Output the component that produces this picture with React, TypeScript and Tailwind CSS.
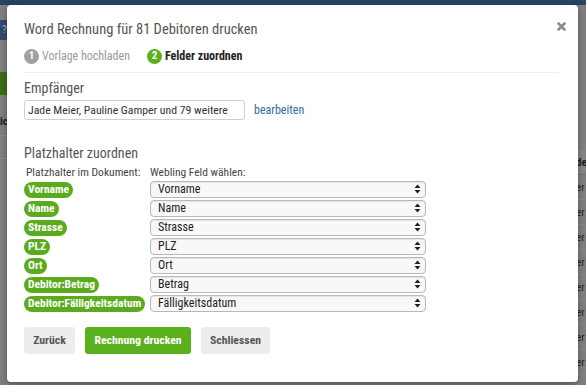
import React from 'react';

const fields = [
  { tag: 'Vorname', value: 'Vorname' },
  { tag: 'Name', value: 'Name' },
  { tag: 'Strasse', value: 'Strasse' },
  { tag: 'PLZ', value: 'PLZ' },
  { tag: 'Ort', value: 'Ort' },
  { tag: 'Debitor:Betrag', value: 'Betrag' },
  { tag: 'Debitor:Fälligkeitsdatum', value: 'Fälligkeitsdatum' },
];

function SelectArrows() {
  return (
    <svg className="absolute right-[5px] top-[3px] pointer-events-none" width="7" height="10" viewBox="0 0 7 10">
      <path d="M3.5 0.5 L6.5 4 H0.5 Z" fill="#222" />
      <path d="M3.5 9.5 L6.5 6 H0.5 Z" fill="#222" />
    </svg>
  );
}

function FieldRow({ tag, value }: { tag: string; value: string }) {
  return (
    <div className="flex items-center h-[19px]">
      <div className="w-[126px] shrink-0 flex items-center h-[19px]">
        <span className="flex items-center h-[16px] px-[4px] rounded-full bg-[#5bab1e] text-white text-[11.5px] font-bold leading-none whitespace-nowrap">
          {tag}
        </span>
      </div>
      <div className="relative flex w-[276px] h-[17px]">
        <select
          defaultValue={value}
          className="block appearance-none w-full h-[17px] py-0 rounded-[4px] border border-[#b8b8b8] bg-[#f8f8f8] pl-[7px] text-[12px] leading-[15px] text-[#222] shadow-[inset_0_1px_1px_rgba(0,0,0,0.08)]"
          style={{ fontFamily: '"Roboto Condensed", sans-serif' }}
        >
          <option>{value}</option>
        </select>
        <SelectArrows />
      </div>
    </div>
  );
}

function Step({ n, label, active }: { n: number; label: string; active?: boolean }) {
  return (
    <div className="flex items-center gap-[3px]">
      <span
        className={
          active
            ? 'flex items-center justify-center w-[15px] h-[15px] rounded-full bg-[#5bb01d] text-white text-[11px] font-bold'
            : 'flex items-center justify-center w-[15px] h-[15px] rounded-full bg-[#a0a0a0] text-white text-[11px] font-bold'
        }
      >
        {n}
      </span>
      <span className={active ? 'text-[12px] font-bold text-[#222]' : 'text-[12px] text-[#9a9a9a]'}>{label}</span>
    </div>
  );
}

export default function App() {
  return (
    <div
      className="relative w-[586px] h-[385px] overflow-hidden bg-[#7f7f7f]"
      style={{ fontFamily: '"Roboto Condensed", Roboto, sans-serif' }}
    >
      {/* Page behind the dialog (already dimmed) */}
      <div className="h-[5px] bg-[#274464]" />
      <div className="flex">
        <div className="w-[10px] shrink-0 overflow-hidden">
          <div className="mt-[15px] h-[20px] bg-[#2f4b6b] text-[#9fb3c8] text-[11px] leading-[20px] pl-[2px]">?</div>
          <div className="mt-[32px] h-[23px] bg-[#3d6e17]" />
          <div className="mt-[20px] text-[11px] font-bold text-[#222] leading-[14px]">ic</div>
          <div className="mt-[6px] border-t border-[#8c8c8c]" />
          <div className="mt-[22px] border-t border-[#8c8c8c]" />
        </div>
        <div className="flex-1" />
        <div className="w-[10px] shrink-0 overflow-hidden pt-[145px] text-[11px] text-[#1e1e1e]">
          <div className="h-[25px] leading-[25px] font-bold bg-[#858585] border-b border-[#707070]">de</div>
          {Array.from({ length: 9 }).map((_, i) => (
            <div key={i} className="h-[25px] leading-[25px] border-b border-[#8a8a8a]">er</div>
          ))}
        </div>
      </div>

      {/* Dialog */}
      <div className="absolute left-[7px] top-[5px] w-[571px] h-[377px] bg-white rounded-[4px] shadow-[0_2px_6px_rgba(0,0,0,0.35)] pt-[16px] px-[17px]">
        <button className="absolute right-[12px] top-[17px] p-0" aria-label="Schliessen">
          <svg width="9" height="9" viewBox="0 0 9 9">
            <path d="M1.5 1.5 L7.5 7.5 M7.5 1.5 L1.5 7.5" stroke="#8a8a8a" strokeWidth="2.6" strokeLinecap="round" />
          </svg>
        </button>

        <h2 className="text-[14.5px] leading-[18px] text-[#555]">Word Rechnung für 81 Debitoren drucken</h2>

        <div className="mt-[9px] flex items-center gap-[17px] h-[16px]">
          <Step n={1} label="Vorlage hochladen" />
          <Step n={2} label="Felder zuordnen" active />
        </div>

        <div className="mt-[8px] mr-[2px] border-t border-[#eeeeee]" />

        <div className="mt-[7px] text-[14px] leading-[17px] text-[#555]">Empfänger</div>
        <div className="mt-[3px] flex items-center">
          <div className="w-[221px] h-[20px] rounded-[3px] border border-[#cfcfcf] px-[3px] text-[11.75px] leading-[18px] text-[#333] whitespace-nowrap overflow-hidden">
            Jade Meier, Pauline Gamper und 79 weitere
          </div>
          <a className="ml-[9px] text-[12px] text-[#3569a5]">bearbeiten</a>
        </div>

        <div className="mt-[25px] text-[14px] leading-[17px] text-[#555]">Platzhalter zuordnen</div>
        <div className="mt-[3px] flex text-[11.5px] leading-[14px] text-[#444] whitespace-nowrap">
          <div className="w-[126px] pl-[2px]">Platzhalter im Dokument:</div>
          <div>Webling Feld wählen:</div>
        </div>

        <div className="mt-[1px] flex flex-col">
          {fields.map(f => (
            <FieldRow key={f.tag} tag={f.tag} value={f.value} />
          ))}
        </div>

        <div className="mt-[14px] flex gap-[10px]">
          <button className="h-[27px] w-[51px] rounded-[3px] bg-[#ededed] text-[11.75px] font-bold text-[#555]">Zurück</button>
          <button className="h-[27px] w-[106px] rounded-[3px] bg-[#5bb01d] text-[11.75px] font-bold text-white">Rechnung drucken</button>
          <button className="h-[27px] w-[69px] rounded-[3px] bg-[#ededed] text-[11.75px] font-bold text-[#555]">Schliessen</button>
        </div>
      </div>
    </div>
  );
}
